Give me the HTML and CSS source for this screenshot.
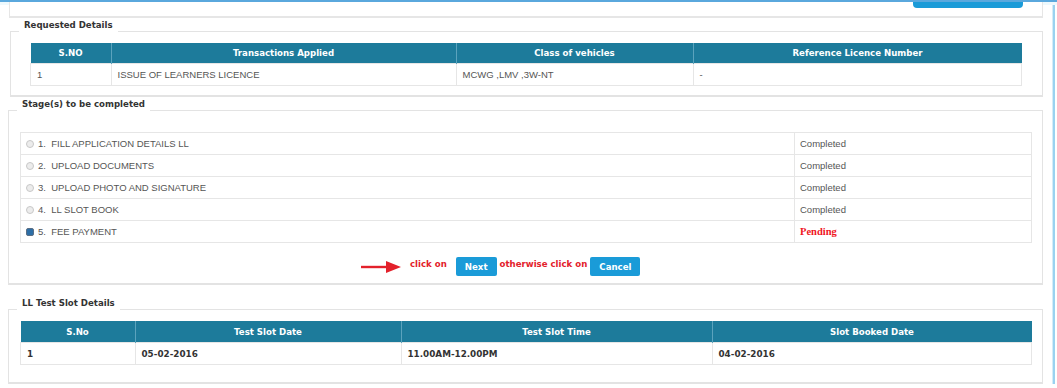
FILE: index.html
```html
<!DOCTYPE html>
<html lang="en">
<head>
    <meta charset="UTF-8">
    <meta name="viewport" content="width=device-width, initial-scale=1.0">
    <title>LL Application Status</title>
    <link rel="stylesheet" href="styles.css">
</head>
<body>
    <div class="top-line"></div>
    <div class="page">
        <div class="content">
            <div class="prev-panel">
                <span class="prev-btn"></span>
            </div>

            <fieldset class="box box-requested">
                <legend>Requested Details</legend>
                <div class="box-body">
                    <table class="grid grid-requested">
                        <thead>
                            <tr>
                                <th class="c-sno">S.NO</th>
                                <th class="c-trans">Transactions Applied</th>
                                <th class="c-class">Class of vehicles</th>
                                <th>Reference Licence Number</th>
                            </tr>
                        </thead>
                        <tbody>
                            <tr>
                                <td>1</td>
                                <td>ISSUE OF LEARNERS LICENCE</td>
                                <td>MCWG ,LMV ,3W-NT</td>
                                <td>-</td>
                            </tr>
                        </tbody>
                    </table>
                </div>
            </fieldset>

            <fieldset class="box box-stages">
                <legend>Stage(s) to be completed</legend>
                <div class="box-body">
                    <table class="stages">
                        <tr>
                            <td><span class="radio"></span>1.&nbsp; FILL APPLICATION DETAILS LL</td>
                            <td class="status">Completed</td>
                        </tr>
                        <tr>
                            <td><span class="radio"></span>2.&nbsp; UPLOAD DOCUMENTS</td>
                            <td class="status">Completed</td>
                        </tr>
                        <tr>
                            <td><span class="radio"></span>3.&nbsp; UPLOAD PHOTO AND SIGNATURE</td>
                            <td class="status">Completed</td>
                        </tr>
                        <tr>
                            <td><span class="radio"></span>4.&nbsp; LL SLOT BOOK</td>
                            <td class="status">Completed</td>
                        </tr>
                        <tr>
                            <td><span class="radio checked"></span>5.&nbsp; FEE PAYMENT</td>
                            <td class="status pending">Pending</td>
                        </tr>
                    </table>

                    <div class="actions">
                        <svg class="arrow" width="42" height="14" viewBox="0 0 42 14">
                            <path d="M1 7 H28" stroke="#e3212b" stroke-width="2.4"/>
                            <path d="M26 1 L41 7 L26 13 Z" fill="#e3212b"/>
                        </svg>
                        <span class="hint hint-first">click on</span>
                        <button class="btn">Next</button>
                        <span class="hint">otherwise click on</span>
                        <button class="btn">Cancel</button>
                    </div>
                </div>
            </fieldset>

            <fieldset class="box box-slot">
                <legend>LL Test Slot Details</legend>
                <div class="box-body">
                    <table class="grid grid-slot">
                        <thead>
                            <tr>
                                <th class="s-sno">S.No</th>
                                <th class="s-date">Test Slot Date</th>
                                <th class="s-time">Test Slot Time</th>
                                <th>Slot Booked Date</th>
                            </tr>
                        </thead>
                        <tbody>
                            <tr>
                                <td>1</td>
                                <td>05-02-2016</td>
                                <td>11.00AM-12.00PM</td>
                                <td>04-02-2016</td>
                            </tr>
                        </tbody>
                    </table>
                </div>
            </fieldset>
        </div>
        <div class="rail"></div>
    </div>
</body>
</html>
```

FILE: styles.css
```css
body {
    margin: 0;
    padding: 0;
    background: #fff;
    font-family: 'Liberation Sans', Arial, sans-serif;
    color: #555;
}
.top-line {
    height: 2px;
    background: #5aa8dd;
}
.page {
    display: flex;
    background: linear-gradient(#eef9fd 0, #eef9fd 3px, #fff 3px);
}
.content {
    width: 1035px;
    margin-left: 8px;
}
.rail {
    width: 2px;
    margin: 3px 0 0 9px;
    background: #9ad2f0;
    border-left: 1px solid #d4ecf8;
}
.prev-panel {
    height: 14px;
    margin-left: 1px;
    border-left: 1px solid #e6e6e6;
    border-right: 1px solid #e6e6e6;
    border-bottom: 2px solid #e6e6e6;
    background: #fff;
    position: relative;
}
.prev-btn {
    position: absolute;
    left: 903px;
    top: 0;
    width: 110px;
    height: 6px;
    background: #1a9bd8;
    border-radius: 0 0 4px 4px;
}

/* fieldsets */
.box {
    margin: 0;
    padding: 0;
    border: 1px solid #e3e3e3;
    border-bottom-width: 2px;
    min-width: 0;
}
.box legend {
    margin-left: 8px;
    padding: 0 5px 12px;
    font-family: 'DejaVu Sans', Verdana, sans-serif;
    font-weight: bold;
    font-size: 8.6px;
    line-height: 12px;
    color: #333;
}
.box-requested {
    margin: 1px 0 0 2px;
}
.box-requested .box-body {
    padding: 0 20px 9px 19px;
}
.box-stages {
    margin-top: 1px;
}
.box-stages .box-body {
    padding: 10px 10px 7px 11px;
}
.box-slot {
    margin-top: 12px;
}
.box-slot .box-body {
    padding: 0 10px 17px 11px;
}

/* data tables */
.grid {
    width: 100%;
    border-collapse: collapse;
}
.grid th {
    background: #1d7b9b;
    color: #fff;
    font-family: 'DejaVu Sans', Verdana, sans-serif;
    font-weight: bold;
    font-size: 8.6px;
    height: 20px;
    padding: 0 4px;
    text-align: center;
    border-left: 1px solid #5ba3bd;
}
.grid th:first-child {
    border-left: none;
}
.grid td {
    height: 21px;
    padding: 0 6px;
    font-size: 9.5px;
    border: 1px solid #e6e6e6;
    text-align: left;
}
.c-sno { width: 72px; }
.c-trans { width: 336px; }
.c-class { width: 228px; }
.grid-slot th { height: 21px; }
.grid-slot td {
    font-family: 'DejaVu Sans', Verdana, sans-serif;
    font-weight: bold;
    font-size: 8.8px;
    color: #333;
}
.s-sno { width: 106px; }
.s-date { width: 257px; }
.s-time { width: 302px; }

/* stages */
.stages {
    width: 100%;
    border-collapse: collapse;
}
.stages td {
    height: 21px;
    padding: 0 4px;
    font-size: 9.5px;
    color: #555;
    border: 1px solid #e6e6e6;
}
.stages td.status {
    width: 227px;
    padding-left: 5px;
}
.stages td.pending {
    font-family: 'Liberation Serif', 'Times New Roman', serif;
    font-weight: bold;
    font-size: 10.5px;
    color: #f0141e;
}
.radio {
    display: inline-block;
    width: 6px;
    height: 6px;
    margin: 0 4px 0 1px;
    border: 1px solid #c8c8c8;
    border-radius: 50%;
    background: #ececec;
    vertical-align: -1px;
}
.radio.checked {
    border-radius: 2px;
    border-color: #5a6e85;
    background: #2d6ea6;
}

.actions {
    display: flex;
    align-items: center;
    margin-top: 14px;
    padding-left: 340px;
}
.arrow {
    margin-right: 8px;
}
.hint {
    font-family: 'DejaVu Sans', Verdana, sans-serif;
    font-weight: bold;
    font-size: 8.6px;
    color: #e3212b;
    margin-top: -5px;
    margin-right: 3px;
}
.hint-first {
    margin-right: 9px;
}
.btn {
    background: #1a9bd8;
    color: #fff;
    border: none;
    border-radius: 2px;
    height: 19px;
    padding: 0 9px;
    font-family: 'DejaVu Sans', Verdana, sans-serif;
    font-weight: bold;
    font-size: 8.6px;
    margin-right: 3px;
}
```
